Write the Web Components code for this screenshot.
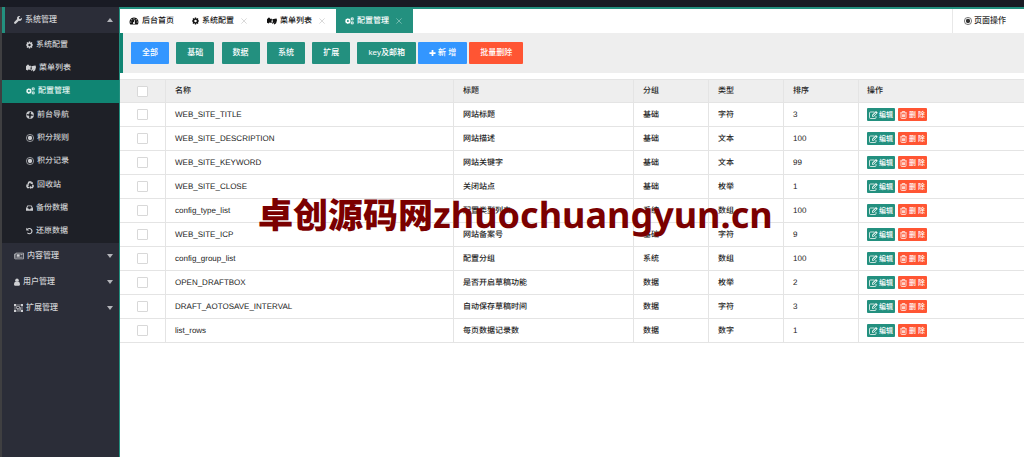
<!DOCTYPE html>
<html lang="zh-CN">
<head>
<meta charset="utf-8">
<title>配置管理</title>
<style>
  html, body { margin: 0; padding: 0; }
  body {
    --teal: #23907f;
    --teal-dark: #108573;
    --blue: #3396ff;
    --red: #ff5533;
    --line: #e4e4e4;
    background: #fff;
    color: #222;
    font: 500 8px/12px "Liberation Sans", "Noto Sans CJK SC", sans-serif;
    text-rendering: geometricPrecision;
  }
</style>
</head>
<body>
<admin-shell>
  <side-group slot="menu" icon="wrench" label="系统管理" open>
    <side-item icon="cog" label="系统配置"></side-item>
    <side-item icon="hands" label="菜单列表"></side-item>
    <side-item icon="cogs" label="配置管理" active></side-item>
    <side-item icon="ring" label="前台导航"></side-item>
    <side-item icon="dot" label="积分规则"></side-item>
    <side-item icon="dot" label="积分记录"></side-item>
    <side-item icon="recycle" label="回收站"></side-item>
    <side-item icon="inbox" label="备份数据"></side-item>
    <side-item icon="undo" label="还原数据"></side-item>
  </side-group>
  <side-group slot="menu" icon="news" label="内容管理"></side-group>
  <side-group slot="menu" icon="user" label="用户管理"></side-group>
  <side-group slot="menu" icon="group" label="扩展管理"></side-group>

  <page-tab slot="tabs" icon="dash" label="后台首页" fixed></page-tab>
  <page-tab slot="tabs" icon="cog" label="系统配置"></page-tab>
  <page-tab slot="tabs" icon="hands" label="菜单列表"></page-tab>
  <page-tab slot="tabs" icon="cogs" label="配置管理" active></page-tab>

  <tool-bar slot="content">
    <tool-button slot="filter" tone="blue">全部</tool-button>
    <tool-button slot="filter">基础</tool-button>
    <tool-button slot="filter">数据</tool-button>
    <tool-button slot="filter">系统</tool-button>
    <tool-button slot="filter">扩展</tool-button>
    <tool-button slot="filter">key及邮箱</tool-button>
    <tool-button tone="blue" icon="plus">新 增</tool-button>
    <tool-button tone="red">批量删除</tool-button>
  </tool-bar>
  <config-table slot="content"></config-table>
  <water-mark slot="content">卓创源码网<span slot="domain">zhuochuangyun.cn</span></water-mark>
</admin-shell>

<script>
/* Icon shapes: [width, markup, view box], drawn in the current colour. */
const GEAR = '<path fill-rule="evenodd" d="M6.500 0h3l.4 2.100 1.100.5L12.900 1.300l1.900 1.900-1.300 1.900.5 1.100 2 .4v2.800l-2.100.4-.4 1.100 1.300 1.900-1.900 1.900-1.900-1.300-1.100.5-.4 2.100H6.500l-.4-2.100-1.100-.5-1.900 1.300-1.900-1.900 1.300-1.900-.4-1.100L0 9.400V6.600l2.100-.4.4-1.100L1.200 3.200l1.900-1.900L5 2.600l1.100-.5zM8 5.200a2.800 2.800 0 1 0 0 5.600 2.800 2.800 0 0 0 0-5.600z"/>';
const ICONS = {
  cog: [7, GEAR, '0 0 16 16'],
  cogs: [9, '<g transform="translate(0 2.500) scale(.76)">' + GEAR + '</g><g transform="translate(11.600 .5) scale(.45)">' + GEAR + '</g><g transform="translate(11.600 9) scale(.45)">' + GEAR + '</g>', '0 0 19 17'],
  wrench: [8, '<path d="M15.600 3.500 12.800 6.200 10.200 5.700 9.700 3.200 12.500.4C10.200-.5 7.800.3 6.700 2.200c-.7 1.300-.8 2.700-.3 4L.7 11.900c-.9.900-.9 2.400 0 3.300s2.400.9 3.300 0l5.700-5.700c3.400 1.300 7-1.900 5.900-6z"/>', '0 0 16 16'],
  hands: [10, '<path d="M0 4 4 0 7 1 6.500 3.500 10 2l1.500 2.500-1.200 4L11 12l-2 .5L6.500 11 4 13.500 0 12z"/><path d="m12 4 6-1 4-1 1 4-2 7-4 3-1.500-1 1.500-4-3.500 3.500-2-1 2-5z"/>', '0 0 23 16'],
  ring: [8, '<circle cx="8" cy="8" r="5.500" fill="none" stroke="currentColor" stroke-width="4" stroke-dasharray="5.640 3" stroke-dashoffset="7.140"/><circle cx="8" cy="8" r="7.300" fill="none" stroke="currentColor" stroke-width="1.200"/>', '0 0 16 16'],
  dot: [8, '<circle cx="8" cy="8" r="7.200" fill="none" stroke="currentColor" stroke-width="1.300"/><circle cx="8" cy="8" r="4.300"/>', '0 0 16 16'],
  recycle: [8, '<path fill="none" stroke="currentColor" stroke-width="3" d="M4 6 6.300 2.200h3.400L11 4.500M13 7.500l1.300 2.500-1.500 3H10M6.500 13H3.200L1.800 10 3 8"/><path d="m8.500 5.500 5 .8.5-4.500zM10 9.500v6.500l-3.500-3zM.2 7.500 5 6.200 5.800 10z"/>', '0 0 16 16'],
  inbox: [7, '<path fill-rule="evenodd" d="M3 2h10l3 7v5H0V9zm1.500 2L2.700 8.800h2.500L6.200 11h3.600l1-2.200h2.500L11.500 4z"/>', '0 0 16 16'],
  undo: [7, '<path fill="none" stroke="currentColor" stroke-width="2.600" d="M3.500 3.800a6 6 0 1 1-.5 8.200"/><path d="M.5.500v6.500H7z"/>', '0 0 16 16'],
  news: [10, '<path fill="none" stroke="currentColor" stroke-width="1.500" d="M4 2h16v12H2.500Q1 14 1 12V4h3zm0 2v9"/><path d="M6 4.500h6v5H6zM13.500 4.500H18v1.200h-4.500zm0 3H18v1.200h-4.500zM6 11h12v1.200H6z"/>', '0 0 21 16'],
  user: [6, '<circle cx="6.500" cy="4" r="3.800"/><path d="M3.500 7q3 2.500 6 0Q13 8 13 13q0 3-2 3H2q-2 0-2-3 0-5 3.500-6z"/>', '0 0 13 16'],
  group: [9, '<path fill="none" stroke="currentColor" stroke-width="1.300" d="M2 2h14v12H2z"/><path d="M0 0h4v4H0zM14 0h4v4h-4zM0 12h4v4H0zM14 12h4v4h-4z"/><path fill="none" stroke="currentColor" stroke-width="1.300" d="M5 5h6v4H5zM7 9v2.500h6V7h-2"/>', '0 0 18 16'],
  dash: [10, '<path fill-rule="evenodd" d="M9 1a9 9 0 0 1 7.700 13.500q-.3.500-.9.500H2.200q-.6 0-.9-.5A9 9 0 0 1 9 1zM9 2.500a1.200 1.200 0 1 0 0 2.400 1.200 1.200 0 0 0 0-2.400zM4.500 4.300a1.200 1.200 0 1 0 0 2.400 1.200 1.200 0 0 0 0-2.400zM2.700 8.800a1.200 1.200 0 1 0 0 2.400 1.200 1.200 0 0 0 0-2.400zM15.300 8.800a1.200 1.200 0 1 0 0 2.400 1.200 1.200 0 0 0 0-2.400zM13.500 4.300a1.200 1.200 0 1 0 0 2.400 1.200 1.200 0 0 0 0-2.400zM9.900 6 8.800 10a2 2 0 1 0 1.500.4L11.200 6.400z"/>', '0 0 18 16'],
  plus: [7, '<path d="M6 1h4v5h5v4h-5v5H6v-5H1V6h5z"/>', '0 0 16 16'],
  close: [6, '<path fill="none" stroke="currentColor" stroke-width="2" d="m1 1 14 14M15 1 1 15"/>', '0 0 16 16'],
  edit: [9, '<path fill="none" stroke="currentColor" stroke-width="1.500" d="M11 2H3Q1 2 1 4v9q0 2 2 2h9q2 0 2-2v-3"/><path fill-rule="evenodd" d="m6 8 8-8 3.500 3.500-8 8H6zm1.500.8L7 10.500h1.700L15 4l-1.200-1.200z"/>', '0 0 18 16'],
  trash: [7, '<path fill="none" stroke="currentColor" stroke-width="1.500" d="M.5 3.500h13M4.500 3V1h5v2M2 4v9.500Q2 15 3.500 15h7q1.500 0 1.500-1.500V4M5 6.500v6M7 6.500v6M9 6.500v6"/>', '0 0 14 16']
};

const define = (tag, css, render) => customElements.define(tag, class extends HTMLElement {
  connectedCallback() {
    if (this.shadowRoot) return;
    const t = document.createElement('template');
    t.innerHTML = '<style>' + css + '</style>' + render(this);
    this.attachShadow({ mode: 'open' }).append(t.content.cloneNode(true));
  }
});

define('ui-icon', `
  :host { display: inline-flex; flex: none; align-items: center; }
  svg { display: block; height: 8px; fill: currentColor; }
`, el => {
  const [w, body, box] = ICONS[el.getAttribute('name')];
  return `<svg width="${w}" viewBox="${box}" aria-hidden="true">${body}</svg>`;
});

define('side-item', `
  :host { display: grid; }
  a { display: flex; align-items: center; gap: 3px; padding-left: 24px; color: #cfd0d3; text-decoration: none; }
  :host([active]) a { background: var(--teal-dark); color: #e6f5f2; }
`, el => `<a href="#"><ui-icon name="${el.getAttribute('icon')}"></ui-icon><span>${el.getAttribute('label')}</span></a>`);

define('side-group', `
  :host { display: block; }
  button {
    display: flex; align-items: center; gap: 3px; width: 100%; height: 26px;
    margin: 0; padding: 0 6px 0 12px; border: 0; background: none;
    color: #cfd0d3; font: inherit; text-align: left;
  }
  :host([open]) button { border-left: 3px solid var(--teal); padding-left: 9px; }
  i { margin-left: auto; border: 3px solid transparent; border-top: 4px solid #b4b5ba; border-bottom: 0; }
  :host([open]) i { border-top: 0; border-bottom: 4px solid #b4b5ba; }
  nav { display: none; }
  :host([open]) nav { display: grid; grid-auto-rows: 1fr; min-height: 210px; background: #1e2027; }
`, el => `<button type="button"><ui-icon name="${el.getAttribute('icon')}"></ui-icon><span>${el.getAttribute('label')}</span><i></i></button><nav><slot></slot></nav>`);

define('page-tab', `
  :host { display: flex; align-items: center; gap: 7px; padding: 0 11px 0 9px; color: #111; }
  :host([active]) { background: var(--teal); color: #fff; }
  :host([fixed]) { padding-right: 9px; }
  a { display: flex; align-items: center; gap: 3px; color: inherit; text-decoration: none; }
  button { display: flex; margin: 0; padding: 0; border: 0; background: none; color: #ccc; }
  :host([active]) button { color: #8cc7bd; }
`, el => `<a href="#"><ui-icon name="${el.getAttribute('icon')}"></ui-icon><span>${el.getAttribute('label')}</span></a>` +
  (el.hasAttribute('fixed') ? '' : '<button type="button" aria-label="关闭"><ui-icon name="close"></ui-icon></button>'));

define('tool-button', `
  :host { display: block; }
  button {
    display: flex; align-items: center; gap: 2px; height: 22px; margin: 0; padding: 0 11px;
    border: 0; border-radius: 1px; background: var(--teal); color: #fff;
    font: inherit; white-space: nowrap;
  }
  :host([tone=blue]) button { background: var(--blue); }
  :host([tone=red]) button { background: var(--red); }
`, el => `<button type="button">${el.hasAttribute('icon') ? `<ui-icon name="${el.getAttribute('icon')}"></ui-icon>` : ''}<span><slot></slot></span></button>`);

define('tool-bar', `
  :host { display: flex; gap: 2px; padding: 9px 8px; border-left: 3px solid var(--teal-dark); background: #eee; }
  div { display: flex; justify-content: space-between; flex: 0 0 285px; }
`, () => '<div><slot name="filter"></slot></div><slot></slot>');

define('row-actions', `
  :host { display: flex; gap: 3px; }
  button {
    display: flex; align-items: center; justify-content: center; gap: 1px; height: 13px; margin: 0; padding: 0 2px;
    border: 0; border-radius: 1px; background: var(--teal); color: #fff;
    font: inherit; font-size: 7px; white-space: nowrap;
  }
  .del { gap: 2px; background: var(--red); }
`, () => '<button type="button"><ui-icon name="edit"></ui-icon>编辑</button><button type="button" class="del"><ui-icon name="trash"></ui-icon>删 除</button>');

const ROWS = [
  ['WEB_SITE_TITLE', '网站标题', '基础', '字符', 3],
  ['WEB_SITE_DESCRIPTION', '网站描述', '基础', '文本', 100],
  ['WEB_SITE_KEYWORD', '网站关键字', '基础', '文本', 99],
  ['WEB_SITE_CLOSE', '关闭站点', '基础', '枚举', 1],
  ['config_type_list', '配置类型列表', '系统', '数组', 100],
  ['WEB_SITE_ICP', '网站备案号', '基础', '字符', 9],
  ['config_group_list', '配置分组', '系统', '数组', 100],
  ['OPEN_DRAFTBOX', '是否开启草稿功能', '数据', '枚举', 2],
  ['DRAFT_AOTOSAVE_INTERVAL', '自动保存草稿时间', '数据', '字符', 3],
  ['list_rows', '每页数据记录数', '数据', '数字', 1]
];
define('config-table', `
  :host { display: block; margin-top: 6px; }
  table { width: 100%; table-layout: fixed; border-collapse: separate; border-spacing: 0; border-top: 1px solid var(--line); }
  th, td {
    height: 23px; padding: 0 9px; border-right: 1px solid var(--line); border-bottom: 1px solid var(--line);
    font-weight: 500; text-align: left; white-space: nowrap;
  }
  th { height: 22px; background: #eee; }
  th:last-child, td:last-child { border-right: 0; padding-left: 8px; }
  th:first-child, td:first-child { padding: 0; }
  .check { width: 46px; } .name { width: 288px; } .title { width: 180px; } .small { width: 75px; }
  input { display: block; appearance: none; box-sizing: border-box; width: 11px; height: 11px; margin: 0 auto; border: 1px solid #d8d8d8; border-radius: 1px; background: #fff; }
`, () => `<table>
  <colgroup><col class="check"><col class="name"><col class="title"><col class="small"><col class="small"><col class="small"><col></colgroup>
  <thead><tr><th><input type="checkbox" aria-label="全选"></th>${['名称', '标题', '分组', '类型', '排序', '操作'].map(h => `<th>${h}</th>`).join('')}</tr></thead>
  <tbody>${ROWS.map(r => `<tr><td><input type="checkbox" aria-label="${r[0]}"></td>${r.map(c => `<td>${c}</td>`).join('')}<td><row-actions></row-actions></td></tr>`).join('')}</tbody>
</table>`);

/* Site name laid over the table. */
define('water-mark', `
  :host {
    position: absolute; left: 138px; top: 181px; pointer-events: none; white-space: nowrap;
    color: #7b0000; font: 900 35px/52px "Noto Sans CJK SC", sans-serif;
  }
  ::slotted(span) { font-family: "Noto Sans", sans-serif; font-size: 36px; font-weight: 700; }
`, () => '<slot></slot><slot name="domain"></slot>');

define('admin-shell', `
  :host { display: flex; flex-direction: column; min-height: 100vh; }
  header { height: 7px; background: #191b24; }
  .body { display: flex; flex: 1; }
  aside { flex: none; box-sizing: border-box; width: 120px; border-left: 2px solid #3f3f41; border-right: 1px solid var(--teal); background: #2b2d38; }
  main { flex: 1; min-width: 0; position: relative; }
  .tabs { display: flex; height: 24px; border-top: 2px solid var(--teal); }
  .ops {
    display: flex; align-items: center; gap: 2px; margin: 0 0 0 auto; padding: 0 18px 0 11px; border: 0;
    border-left: 1px solid #e8e8e8; background: none; color: #333; font: inherit;
  }
`, () => `<header></header><div class="body">
  <aside><slot name="menu"></slot></aside>
  <main>
    <div class="tabs"><slot name="tabs"></slot><button type="button" class="ops"><ui-icon name="dot"></ui-icon>页面操作</button></div>
    <slot name="content"></slot>
  </main></div>`);
</script>
</body>
</html>
